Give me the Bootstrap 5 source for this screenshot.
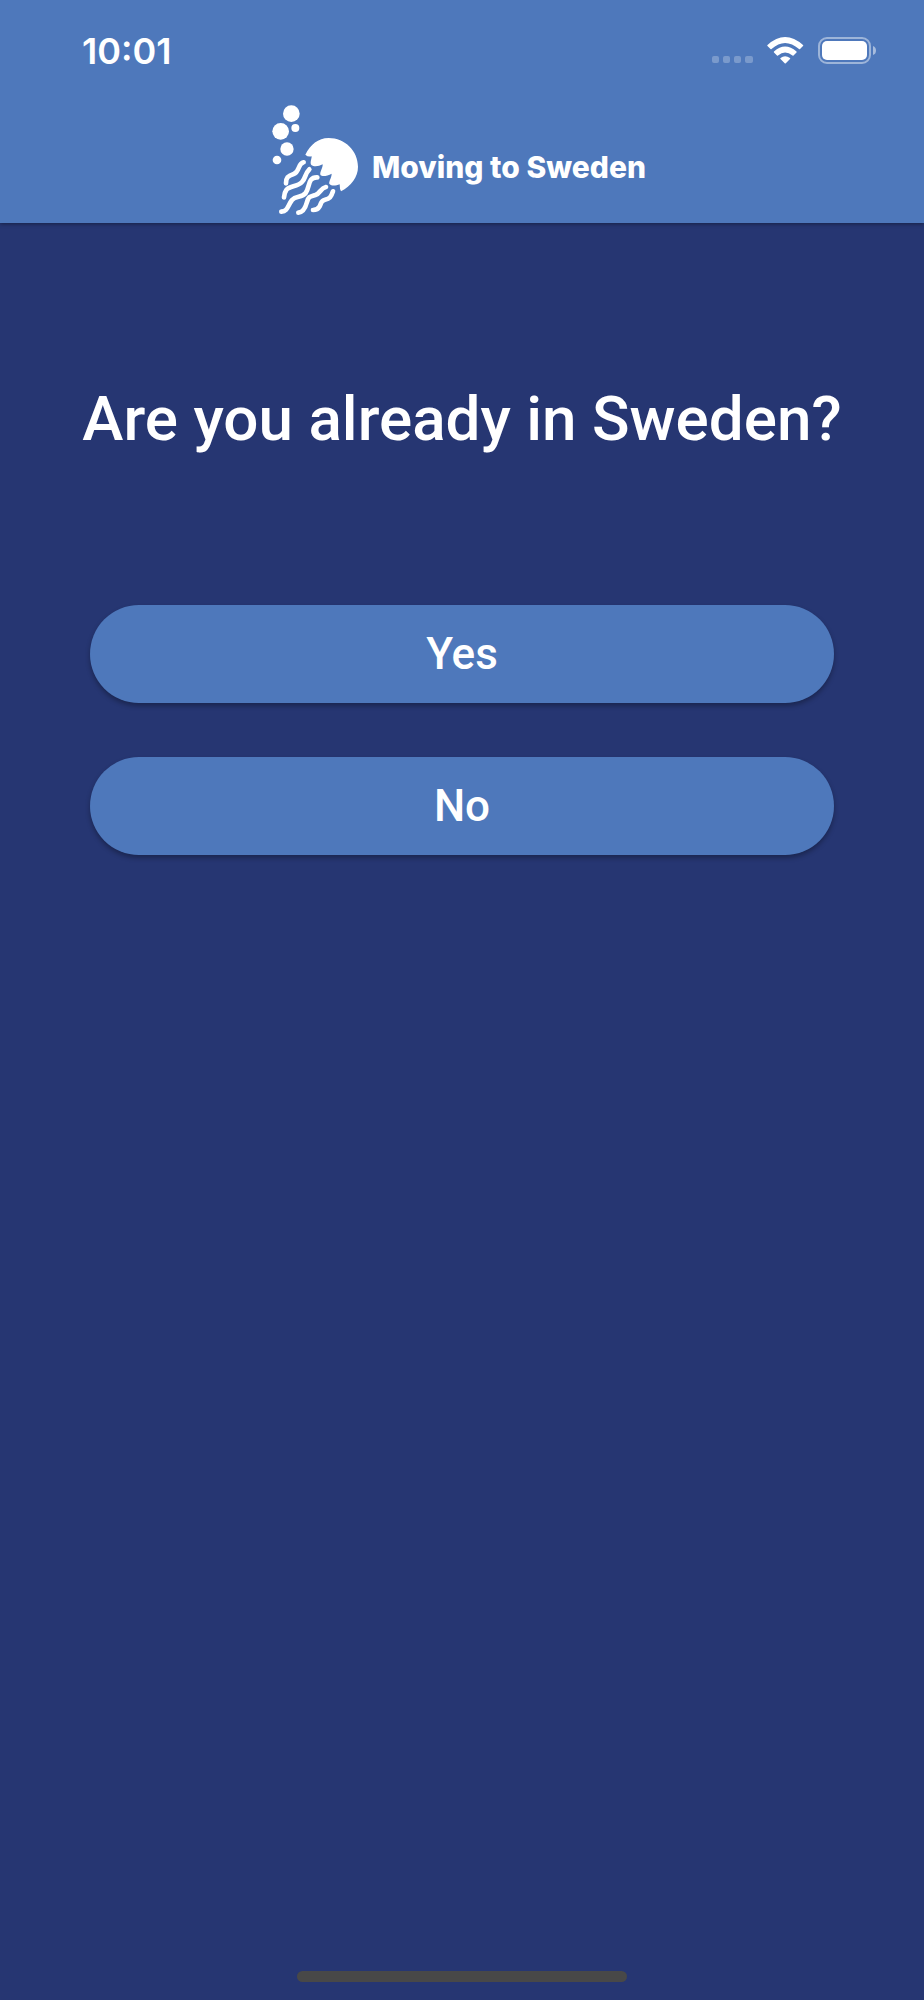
<!DOCTYPE html>
<html lang="en">
<head>
<meta charset="utf-8">
<meta name="viewport" content="width=device-width, initial-scale=1">
<title>Moving to Sweden</title>
<link href="https://cdn.jsdelivr.net/npm/bootstrap@5.3.0/dist/css/bootstrap.min.css" rel="stylesheet">
<style>
  body { background: #263672; color: #fff; font-family: Roboto, sans-serif; }
  .app-header { background: #4e78bb; box-shadow: 0 1px 4px rgba(0, 0, 0, .4); }
  .status-bar { height: 102px; padding: 0 47px 0 82px; font: 600 36px/40px Inter, sans-serif; }
  .brand-row { height: 121px; padding-right: 8px; padding-bottom: 4px; }
  .brand-link { gap: 12px; }
  .brand-name { font: 800 30px/40px Inter, sans-serif; color: #fff; padding-top: 12px; }
  .question { font-size: 62px; line-height: 76px; font-weight: 500; padding-top: 158px; margin-bottom: 148px; }
  .answers { padding: 0 90px; gap: 54px; }
  .answer { --bs-btn-bg: #4e78bb; --bs-btn-color: #fff; --bs-btn-hover-bg: #5b84c5; --bs-btn-hover-color: #fff;
    height: 98px; border: 0; font-size: 44px; line-height: 54px; font-weight: 500; box-shadow: 0 3px 5px rgba(0, 0, 0, .3); }
  .home-bar { width: 330px; height: 11px; background: #484848; margin-bottom: 18px; }
</style>
</head>
<body class="d-flex flex-column min-vh-100">
<header class="app-header">
  <div class="status-bar d-flex align-items-center justify-content-between">
    <time datetime="10:01">10:01</time>
    <svg width="165" height="28" viewBox="0 0 165 28" fill="#fff" role="img" aria-label="No signal, Wi-Fi on, battery full">
      <g opacity=".25"><rect y="19" width="7" height="7" rx="2"/><rect x="11" y="19" width="7" height="7" rx="2"/><rect x="22" y="19" width="7" height="7" rx="2"/><rect x="33" y="19" width="8" height="7" rx="2"/></g>
      <path d="M55.500 8.000Q73 -8 91 8Q91.500 8.500 91 9L88 12Q87.500 12.500 87 12Q73 0 59.500 12Q59 12.500 58.500 12L55.500 9Q55 8.500 55.500 8Z"/>
      <path d="M62 14.500Q73 4.500 84.500 14.500Q85 15 84.500 15.500L81.500 18.500Q81 19 80.500 18.500Q73 12.500 66 18.500Q65.500 19 65 18.500L62 15.500Q61.500 15 62 14.500Z"/>
      <path d="M68.500 21Q73 17.500 78 21Q78.500 21.500 78 22L73.800 26.300Q73.200 26.800 72.700 26.300L68.500 22Q68 21.500 68.500 21Z"/>
      <rect x="107" y="1" width="51" height="25" rx="8" fill="none" stroke="#fff" stroke-width="2" opacity=".45"/>
      <rect x="110" y="4" width="45" height="19" rx="5"/>
      <path d="M161 9Q164 10 164 13.500T161 18Z" opacity=".5"/>
    </svg>
  </div>
  <div class="brand-row d-flex align-items-center justify-content-center">
    <a href="#" class="brand-link d-flex align-items-center text-decoration-none" aria-label="Moving to Sweden">
      <svg width="90" height="114" viewBox="26 26 270 342" fill="#fff" aria-hidden="true">
        <circle cx="90" cy="55" r="25"/><circle cx="58" cy="108" r="25"/><circle cx="102" cy="98" r="12"/><circle cx="77" cy="161" r="20"/><circle cx="47" cy="194" r="13"/>
        <path d="M132 178C148 148 170 128 202 128C251 128 290 167 290 214C290 246 269 272 239 288Q235 282 235 267C225 271 211 273 205 267C200 260 211 248 211 235C198 243 182 244 178 240C173 232 185 219 184 207C172 214 157 215 150 209C145 202 151 192 151 183Q140 186 132 178Z"/>
        <g fill="none" stroke="#fff" stroke-width="14" stroke-linecap="round">
          <path d="M127 201C108 205 116 230 97 236C79 242 74 247 74 264"/>
          <path d="M144 222C130 236 134 247 122 260C108 275 84 271 75 284Q69 292 68 306"/>
          <path d="M168 246C138 245 146 276 133 293C122 308 104 301 92 314C79 331 80 347 60 349"/>
          <path d="M194 275C176 279 179 293 162 299C145 304 142 303 137 320C132 339 126 351 111 352"/>
          <path d="M215 288C209 306 205 310 191 313C178 316 182 320 175 333Q169 344 155 344"/>
        </g>
      </svg>
      <span class="brand-name">Moving to Sweden</span>
    </a>
  </div>
</header>
<main class="flex-grow-1 text-center">
  <h1 class="question">Are you already in Sweden?</h1>
  <div class="answers d-flex flex-column">
    <button type="button" class="answer btn rounded-pill">Yes</button>
    <button type="button" class="answer btn rounded-pill">No</button>
  </div>
</main>
<footer><div class="home-bar rounded-pill mx-auto"></div></footer>
<script src="https://cdn.jsdelivr.net/npm/bootstrap@5.3.0/dist/js/bootstrap.bundle.min.js"></script>
</body>
</html>
